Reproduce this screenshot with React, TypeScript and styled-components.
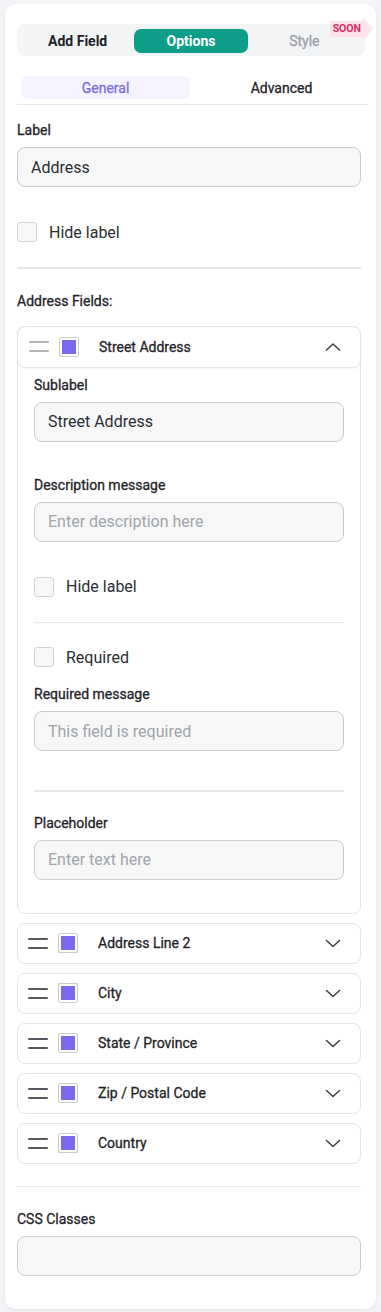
import React from "react";
import styled, { createGlobalStyle } from "styled-components";

const Global = createGlobalStyle`
  html, body { margin: 0; padding: 0; background: #f3f4f8; }
  body { font-family: Roboto, "Liberation Sans", Arial, sans-serif; color: #1f2328; }
  * { box-sizing: border-box; }
`;

const medium = `font-weight: 400; -webkit-text-stroke: 0.3px currentColor;`;

const Page = styled.div`
  padding: 4px 5px 4px 5px;
  width: 381px;
`;

const Card = styled.div`
  background: #fff;
  border-radius: 10px;
  box-shadow: 0 1px 3px rgba(20, 24, 40, 0.08);
  padding: 20px 7px 33px 12px;
`;

const TabBar = styled.div`
  position: relative;
  display: grid;
  grid-template-columns: repeat(3, 1fr);
  background: #f3f4f6;
  border-radius: 8px;
  padding: 5px 4px;
  margin-right: 4px;
  height: 32px;
`;

const Tab = styled.div<{ $active?: boolean; $muted?: boolean }>`
  display: flex;
  align-items: center;
  justify-content: center;
  height: 24px;
  border-radius: 7px;
  font-size: 14px;
  font-weight: ${(p) => (p.$muted ? 400 : 700)};
  ${(p) => (p.$muted ? "-webkit-text-stroke: 0.3px currentColor;" : "")}
  background: ${(p) => (p.$active ? "#0d9e8a" : "transparent")};
  color: ${(p) => (p.$active ? "#fff" : p.$muted ? "#9a9ea6" : "#1f2328")};
`;

const Soon = styled.div`
  position: absolute;
  top: -7px;
  right: -8px;
  display: flex;
  align-items: center;
`;

const SoonBox = styled.span`
  background: #fde1ea;
  color: #d02f5f;
  font-size: 10.5px;
  font-weight: 700;
  padding: 1px 2px 1px 3px;
  line-height: 14px;
`;

const SoonArrow = styled.span`
  width: 0;
  height: 0;
  border-top: 12px solid transparent;
  border-bottom: 12px solid transparent;
  border-left: 10px solid #fde6ee;
`;

const SubTabs = styled.div`
  display: grid;
  grid-template-columns: 1fr 1fr;
  margin-top: 20px;
  padding: 0 3px 5px 4px;
  border-bottom: 1.5px solid #e5e7eb;
  gap: 7px;
`;

const SubTab = styled.div<{ $active?: boolean }>`
  height: 23px;
  display: flex;
  align-items: center;
  justify-content: center;
  border-radius: 7px;
  font-size: 14px;
  ${medium}
  background: ${(p) => (p.$active ? "#f5f3ff" : "transparent")};
  color: ${(p) => (p.$active ? "#7c6ddc" : "#1f2328")};
`;

const Form = styled.div`
  padding-right: 8px;
`;

const Label = styled.div<{ $top?: number }>`
  font-size: 14px;
  ${medium}
  line-height: 20px;
  margin-top: ${(p) => p.$top ?? 0}px;
  margin-bottom: 7px;
  color: #1f2328;
`;

const Input = styled.div<{ $placeholder?: boolean }>`
  height: 40px;
  border: 1px solid #c9cbd1;
  border-radius: 8px;
  background: #f7f7f8;
  display: flex;
  align-items: center;
  padding: 0 13px;
  font-size: 16px;
  color: ${(p) => (p.$placeholder ? "#a0a4ab" : "#2a2e34")};
`;

const CheckRow = styled.div<{ $top: number }>`
  display: flex;
  align-items: center;
  gap: 12px;
  height: 20px;
  margin-top: ${(p) => p.$top}px;
  font-size: 16px;
  color: #2a2e34;
`;

const Box = styled.span`
  width: 20px;
  height: 20px;
  border: 1px solid #cfd1d6;
  border-radius: 3px;
  background: #f7f7f8;
`;

const Divider = styled.div<{ $top: number }>`
  height: 1.5px;
  background: #e5e7eb;
  margin-top: ${(p) => p.$top}px;
`;

const Accordion = styled.div<{ $top?: number }>`
  border: 1px solid #e3e5e9;
  border-radius: 8px;
  margin-top: ${(p) => p.$top ?? 9}px;
  background: #fff;
`;

const Header = styled.div<{ $open?: boolean }>`
  height: ${(p) => (p.$open ? 42 : 39)}px;
  display: flex;
  align-items: center;
  padding: 0 18px 0 10px;
  border-radius: 8px;
  margin: ${(p) => (p.$open ? "-1px -1px 0 -1px" : "0")};
  border: ${(p) => (p.$open ? "1px solid #e3e5e9" : "none")};
  box-shadow: ${(p) => (p.$open ? "0 1px 2px rgba(0,0,0,0.04)" : "none")};
  padding-left: ${(p) => (p.$open ? 11 : 10)}px;
`;

const Handle = styled.span<{ $light?: boolean }>`
  width: 20px;
  display: flex;
  flex-direction: column;
  gap: 7px;
  &::before,
  &::after {
    content: "";
    display: block;
    height: 2px;
    background: ${(p) => (p.$light ? "#b3b5ba" : "#55585e")};
    border-radius: 1px;
  }
`;

const ColorBox = styled.span`
  width: 20px;
  height: 20px;
  margin-left: 10px;
  border: 1px solid #c9cbd0;
  border-radius: 2px;
  padding: 2px;
  background: #fff;
  display: flex;
  &::after {
    content: "";
    flex: 1;
    background: #7a6af0;
  }
`;

const Title = styled.span`
  margin-left: 20px;
  font-size: 14px;
  ${medium}
  flex: 1;
  color: #1f2328;
`;

const Body = styled.div`
  padding: 7px 16px 33px 16px;
`;

const Chevron = ({ up }: { up?: boolean }) => (
  <svg width="18" height="18" viewBox="0 0 18 18" fill="none">
    <path
      d={up ? "M2.5 12 L9 6 L15.5 12" : "M2.5 6.5 L9 12.5 L15.5 6.5"}
      stroke="#3a3d42"
      strokeWidth="1.5"
      strokeLinecap="round"
      strokeLinejoin="round"
    />
  </svg>
);

const collapsed = ["Address Line 2", "City", "State / Province", "Zip / Postal Code", "Country"];

export default function App() {
  return (
    <>
      <Global />
      <Page>
        <Card>
          <TabBar>
            <Tab>Add Field</Tab>
            <Tab $active>Options</Tab>
            <Tab $muted>Style</Tab>
            <Soon>
              <SoonBox>SOON</SoonBox>
              <SoonArrow />
            </Soon>
          </TabBar>
          <SubTabs>
            <SubTab $active>General</SubTab>
            <SubTab>Advanced</SubTab>
          </SubTabs>
          <Form>
            <Label $top={15}>Label</Label>
            <Input>Address</Input>
            <CheckRow $top={35}>
              <Box />
              Hide label
            </CheckRow>
            <Divider $top={25} />
            <Label $top={22}>Address Fields:</Label>
            <Accordion $top={15}>
              <Header $open>
                <Handle $light />
                <ColorBox />
                <Title>Street Address</Title>
                <Chevron up />
              </Header>
              <Body>
                <Label>Sublabel</Label>
                <Input>Street Address</Input>
                <Label $top={33}>Description message</Label>
                <Input $placeholder>Enter description here</Input>
                <CheckRow $top={35}>
                  <Box />
                  Hide label
                </CheckRow>
                <Divider $top={25} />
                <CheckRow $top={24}>
                  <Box />
                  Required
                </CheckRow>
                <Label $top={17}>Required message</Label>
                <Input $placeholder>This field is required</Input>
                <Divider $top={39} />
                <Label $top={21}>Placeholder</Label>
                <Input $placeholder>Enter text here</Input>
              </Body>
            </Accordion>
            {collapsed.map((t) => (
              <Accordion key={t}>
                <Header>
                  <Handle />
                  <ColorBox />
                  <Title>{t}</Title>
                  <Chevron />
                </Header>
              </Accordion>
            ))}
            <Divider $top={22} />
            <Label $top={22}>CSS Classes</Label>
            <Input />
          </Form>
        </Card>
      </Page>
    </>
  );
}
